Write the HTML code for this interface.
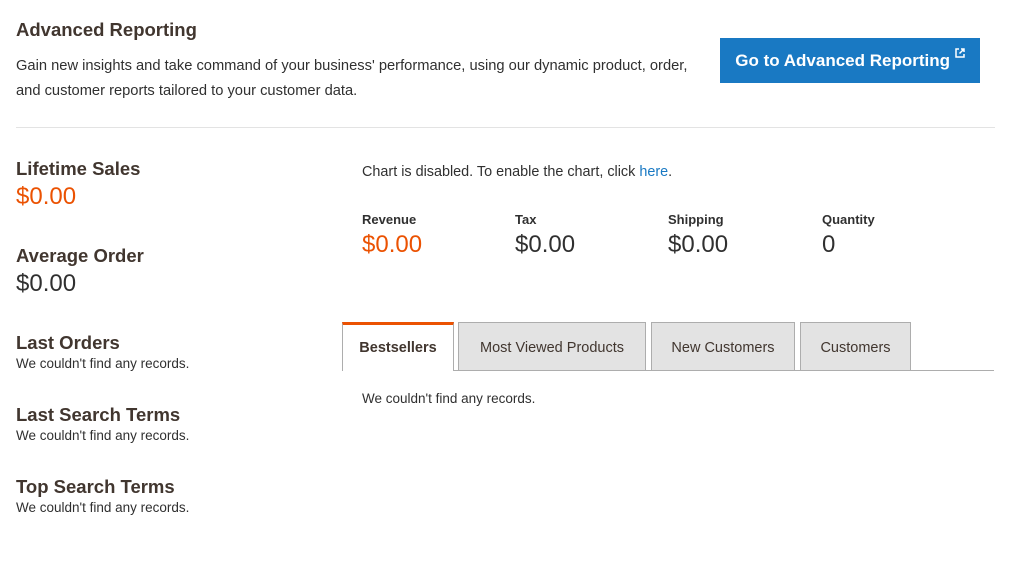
<html><head><style>
body{margin:0;width:1023px;height:563px;background:#fff;font-family:"Liberation Sans",sans-serif;color:#303030;position:relative;overflow:hidden}
.a{position:absolute;white-space:nowrap}
.h{font-weight:bold;font-size:18.5px;color:#41362f}
.s{font-size:13.5px;color:#303030}
.big{font-size:24px;color:#303030}
.or{color:#eb5202}
.lbl{font-size:13px;font-weight:bold;color:#303030}
.tab{position:absolute;top:322px;height:48px;background:#e3e3e3;border:1px solid #adadad;border-bottom:none;box-sizing:border-box;font-size:14.5px;color:#41362f;text-align:center;line-height:50px}
</style></head><body>
<div class="a h" style="left:16px;top:19px;font-size:18.5px">Advanced Reporting</div>
<div class="a" style="left:16px;top:54px;font-size:14.7px;line-height:25px">Gain new insights and take command of your business' performance, using our dynamic product, order,<br>and customer reports tailored to your customer data.</div>
<div class="a" style="left:720px;top:38px;width:260px;height:45px;background:#1979c3;color:#fff;font-weight:bold;font-size:17px;line-height:45px;text-align:center">Go to Advanced Reporting <svg width="10" height="10" viewBox="0 0 10 10" style="vertical-align:8px"><path d="M4 1H1v8h8V6M6 1h3v3M9 1L4.5 5.5" stroke="#fff" stroke-width="1.5" fill="none"/></svg></div>
<div class="a" style="left:16px;top:127px;width:979px;height:1px;background:#e3e3e3"></div>
<div class="a h" style="left:16px;top:158px">Lifetime Sales</div>
<div class="a big or" style="left:16px;top:183px">$0.00</div>
<div class="a h" style="left:16px;top:245px">Average Order</div>
<div class="a big" style="left:16px;top:270px">$0.00</div>
<div class="a h" style="left:16px;top:332px">Last Orders</div>
<div class="a s" style="left:16px;top:356px">We couldn't find any records.</div>
<div class="a h" style="left:16px;top:404px">Last Search Terms</div>
<div class="a s" style="left:16px;top:428px">We couldn't find any records.</div>
<div class="a h" style="left:16px;top:476px">Top Search Terms</div>
<div class="a s" style="left:16px;top:500px">We couldn't find any records.</div>
<div class="a" style="left:362px;top:164px;font-size:14.4px">Chart is disabled. To enable the chart, click <span style="color:#1979c3">here</span>.</div>
<div class="a lbl" style="left:362px;top:212px">Revenue</div>
<div class="a big or" style="left:362px;top:231px">$0.00</div>
<div class="a lbl" style="left:515px;top:212px">Tax</div>
<div class="a big" style="left:515px;top:231px">$0.00</div>
<div class="a lbl" style="left:668px;top:212px">Shipping</div>
<div class="a big" style="left:668px;top:231px">$0.00</div>
<div class="a lbl" style="left:822px;top:212px">Quantity</div>
<div class="a big" style="left:822px;top:231px">0</div>
<div class="a" style="left:342px;top:370px;width:652px;height:1px;background:#adadad"></div>
<div class="tab" style="left:342px;width:112px;height:49px;background:#fff;border-top:3px solid #eb5202;line-height:46px;font-weight:bold">Bestsellers</div>
<div class="tab" style="left:458px;width:188px">Most Viewed Products</div>
<div class="tab" style="left:651px;width:144px">New Customers</div>
<div class="tab" style="left:800px;width:111px">Customers</div>
<div class="a s" style="left:362px;top:391px">We couldn't find any records.</div>
</body></html>
